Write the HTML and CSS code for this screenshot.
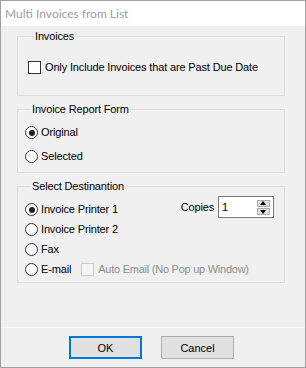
FILE: index.html
```html
<!DOCTYPE html>
<html lang="en">
<head>
    <meta charset="UTF-8">
    <title>Multi Invoices from List</title>
    <link rel="stylesheet" href="styles.css">
</head>
<body>
    <div class="window">
        <div class="titlebar">Multi Invoices from List</div>

        <div class="content">
            <fieldset class="group group-invoices">
                <legend>Invoices</legend>
                <label class="option">
                    <input type="checkbox" class="check">
                    <span>Only Include Invoices that are Past Due Date</span>
                </label>
            </fieldset>

            <fieldset class="group group-form">
                <legend>Invoice Report Form</legend>
                <label class="option">
                    <input type="radio" name="form" class="radio" checked>
                    <span>Original</span>
                </label>
                <label class="option">
                    <input type="radio" name="form" class="radio">
                    <span>Selected</span>
                </label>
            </fieldset>

            <fieldset class="group group-dest">
                <legend>Select Destinantion</legend>
                <div class="dest-grid">
                    <div class="dest-list">
                        <label class="option">
                            <input type="radio" name="dest" class="radio" checked>
                            <span>Invoice Printer 1</span>
                        </label>
                        <label class="option">
                            <input type="radio" name="dest" class="radio">
                            <span>Invoice Printer 2</span>
                        </label>
                        <label class="option">
                            <input type="radio" name="dest" class="radio">
                            <span>Fax</span>
                        </label>
                    </div>

                    <div class="copies">
                        <span>Copies</span>
                        <div class="spinner">
                            <span class="spinner-value">1</span>
                            <div class="spin-buttons">
                                <span class="spin-btn up"></span>
                                <span class="spin-btn down"></span>
                            </div>
                        </div>
                    </div>

                    <div class="email-row">
                        <label class="option">
                            <input type="radio" name="dest" class="radio">
                            <span>E-mail</span>
                        </label>
                        <label class="option disabled">
                            <input type="checkbox" class="check" disabled>
                            <span>Auto Email (No Pop up Window)</span>
                        </label>
                    </div>
                </div>
            </fieldset>
        </div>

        <div class="footer">
            <button class="btn btn-default">OK</button>
            <button class="btn">Cancel</button>
        </div>
    </div>
</body>
</html>
```

FILE: styles.css
```css
body {
    margin: 0;
    font-family: 'Liberation Sans', Arial, sans-serif;
    font-size: 11px;
    letter-spacing: -0.15px;
    color: #000;
}

.window {
    width: 306px;
    height: 368px;
    box-sizing: border-box;
    border: 1px solid #a0a0a0;
    background-color: #f0f0f0;
    display: flex;
    flex-direction: column;
}

.titlebar {
    height: 25px;
    line-height: 25px;
    padding-left: 4px;
    background-color: #fff;
    font-family: Lato, 'Noto Sans', sans-serif;
    font-size: 12px;
    letter-spacing: 0;
    color: #9c9cad; /* inactive caption */
}

.content {
    flex: 1;
    padding: 4px 20px 0 16px;
    display: flex;
    flex-direction: column;
    gap: 7px;
}

/* Group boxes */
.group {
    margin: 0;
    padding: 0;
    border: 1px solid #dcdcdc;
    min-width: 0;
}

.group legend {
    margin-left: 6px;
    padding: 0 1px;
    line-height: 13px;
}

.group-invoices {
    padding: 18px 0 21px 10px;
}

.group-form {
    padding: 10px 0 9px 7px;
    display: flex;
    flex-direction: column;
    gap: 11px;
}

.group-dest {
    padding: 10px 10px 6px 7px;
}

.dest-grid {
    display: grid;
    grid-template-columns: 1fr auto;
    row-gap: 7px;
    align-items: start;
}

.dest-list {
    display: flex;
    flex-direction: column;
    gap: 7px;
}

.email-row {
    grid-column: 1 / -1;
    display: flex;
    gap: 10px;
}

/* Options */
.option {
    display: flex;
    align-items: center;
    height: 13px;
    line-height: 13px;
    white-space: nowrap;
}

.check, .radio {
    appearance: none;
    -webkit-appearance: none;
    margin: 0 3px 0 0;
    width: 13px;
    height: 13px;
    flex: none;
    background-color: #fff;
    border: 1px solid #333;
    box-sizing: border-box;
}

.check {
    margin-right: 4px;
}

.radio {
    border-radius: 50%;
    position: relative;
}

.radio:checked::after {
    content: "";
    position: absolute;
    left: 2.5px;
    top: 2.5px;
    width: 6px;
    height: 6px;
    border-radius: 50%;
    background-color: #222;
}

.disabled {
    color: #8d8d8d;
    letter-spacing: -0.25px;
}

.disabled .check {
    border-color: #cccccc;
    background-color: #f6f6f6;
}

/* Copies spinner */
.copies {
    display: flex;
    align-items: center;
    gap: 4px;
    margin-top: -7px;
}

.spinner {
    width: 56px;
    height: 22px;
    box-sizing: border-box;
    border: 1px solid #7a7a7a;
    background-color: #fff;
    display: flex;
    align-items: center;
    justify-content: space-between;
    padding: 0 3px 0 3px;
}

.spin-buttons {
    display: flex;
    flex-direction: column;
    gap: 1px;
}

.spin-btn {
    width: 13px;
    height: 7px;
    box-sizing: border-box;
    background-color: #e1e1e1;
    border: 1px solid #adadad;
    position: relative;
}

.spin-btn::after {
    content: "";
    position: absolute;
    left: 2px;
    width: 0;
    height: 0;
    border-left: 3.5px solid transparent;
    border-right: 3.5px solid transparent;
}

.spin-btn.up::after {
    top: 0;
    border-bottom: 4px solid #000;
}

.spin-btn.down::after {
    top: 1px;
    border-top: 4px solid #000;
}

/* Footer */
.footer {
    height: 40px;
    box-sizing: border-box;
    border-top: 1px solid #fafafa;
    padding: 8px 0 0 68px;
    display: flex;
    gap: 19px;
    align-items: flex-start;
}

.btn {
    width: 73px;
    height: 23px;
    margin: 0;
    padding: 0;
    font-family: 'Liberation Sans', Arial, sans-serif;
    font-size: 11px;
    color: #000;
    background-color: #e1e1e1;
    border: 1px solid #adadad;
}

.btn-default {
    border: 2px solid #0078d7;
}
```
